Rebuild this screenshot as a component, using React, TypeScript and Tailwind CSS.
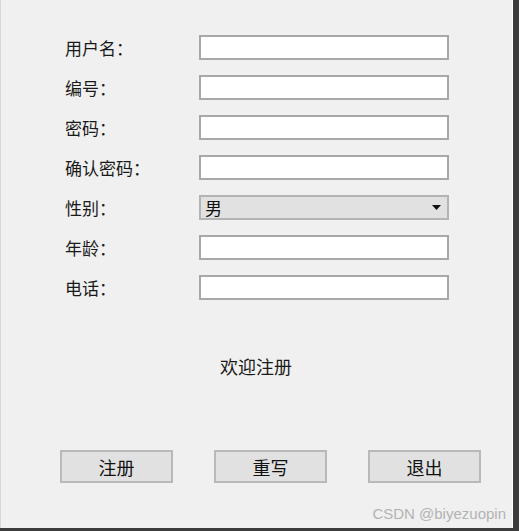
import React from 'react';

const fields = ['用户名：', '编号：', '密码：', '确认密码：', '性别：', '年龄：', '电话：'];

const font = { fontFamily: '"Noto Sans CJK SC", "Noto Sans", sans-serif' };

const App: React.FC = () => {
  return (
    <div className="w-[519px] h-[531px] flex flex-col bg-[#3c3c3c]" style={font}>
      <div className="flex flex-1">
        <div className="flex-1 flex flex-col bg-[#f0f0f0] border-r border-white border-l border-l-[#d8d8d8]">
          {/* Form */}
          <div className="pt-[35px] pl-[64px] flex flex-col gap-[15px]">
            {fields.map((label) => (
              <div key={label} className="flex items-center h-[25px]">
                <span className="w-[134px] text-[17px] text-[#1a1a1a] leading-none">{label}</span>
                {label === '性别：' ? (
                  <div className="w-[250px] h-[25px] flex items-center justify-between bg-[#e1e1e1] border-2 border-[#b4b4b4] pl-[4px] pr-[6px]">
                    <span className="text-[17px] text-[#111] leading-none">男</span>
                    <svg width="9" height="5" viewBox="0 0 9 5">
                      <path d="M0 0H9L4.5 5Z" fill="#111" />
                    </svg>
                  </div>
                ) : (
                  <input
                    type="text"
                    className="w-[250px] h-[25px] bg-white border-2 border-[#a8a8a8] outline-none"
                  />
                )}
              </div>
            ))}
          </div>

          {/* Welcome text */}
          <div className="mt-[57px] pl-[219px] text-[18px] text-[#1a1a1a] leading-none">欢迎注册</div>

          {/* Buttons */}
          <div className="mt-[75px] pl-[59px] flex gap-[41px]">
            {['注册', '重写', '退出'].map((b) => (
              <button
                key={b}
                className="w-[113px] h-[33px] bg-[#e1e1e1] border-2 border-[#b9b9b9] text-[18px] text-[#111] leading-none"
              >
                {b}
              </button>
            ))}
          </div>

          <div
            className="mt-auto mb-[3px] self-end pr-[6px] text-[15px] text-[#b3b3b3]"
            style={{ fontFamily: '"Liberation Sans", Arial, sans-serif' }}
          >
            CSDN @biyezuopin
          </div>
        </div>
        <div className="w-[6px]" />
      </div>
      <div className="h-[3px]" />
    </div>
  );
};

export default App;
